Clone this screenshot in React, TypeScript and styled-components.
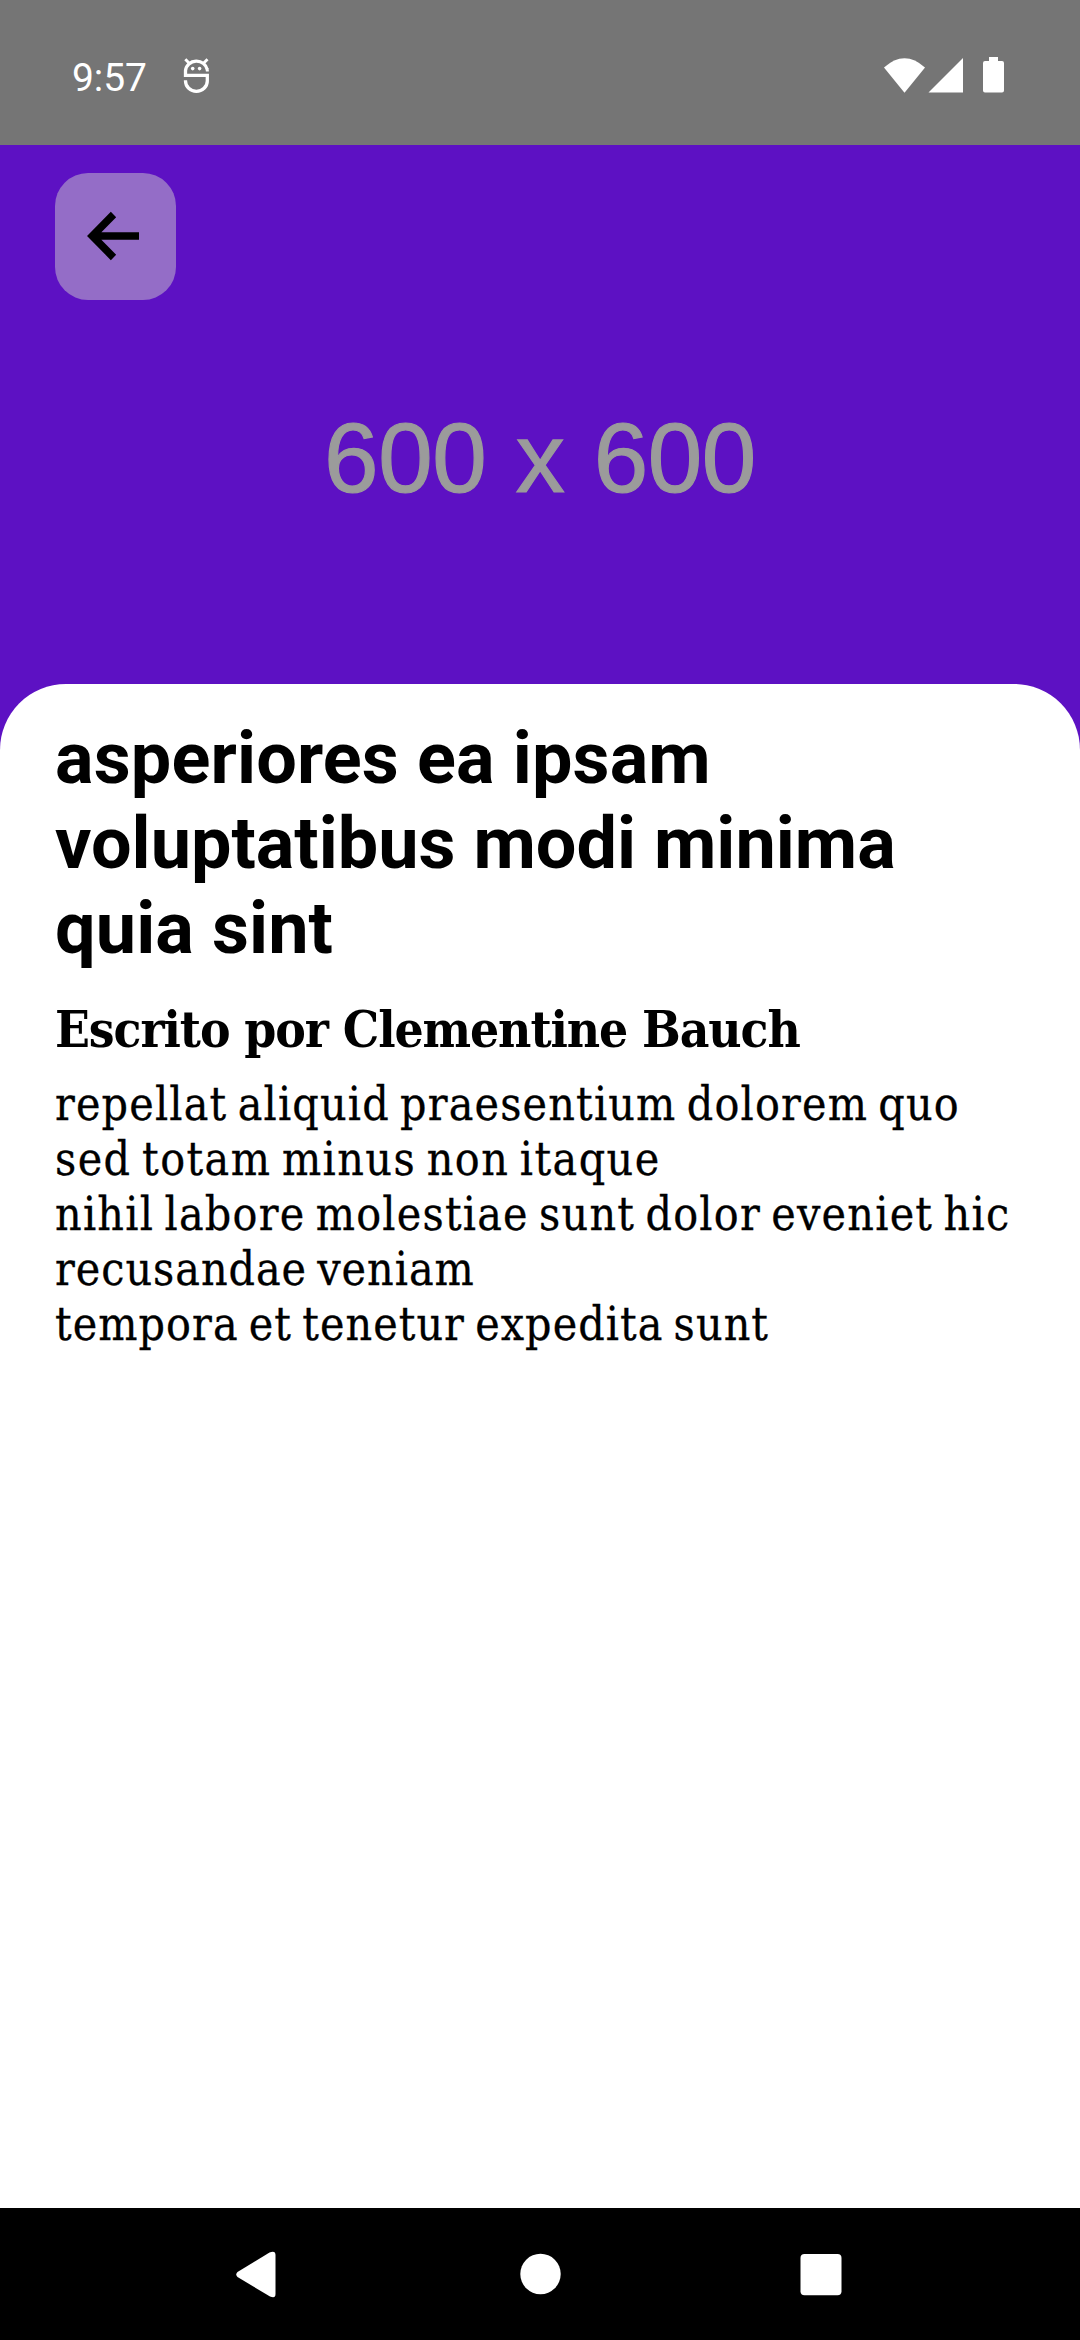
import React from 'react';
import styled, { createGlobalStyle } from 'styled-components';

const GlobalStyle = createGlobalStyle`
  body { margin: 0; background: #fff; }
  * { box-sizing: border-box; }
`;

const Screen = styled.div`
  width: 1080px;
  height: 2340px;
  display: flex;
  flex-direction: column;
  overflow: hidden;
  background: #fff;
  color: #000;
  font-family: Roboto, sans-serif;
`;

const StatusBar = styled.header`
  height: 145px;
  flex: none;
  display: flex;
  align-items: flex-start;
  padding: 54px 75px 0 72px;
  background: #757575;
  color: #fff;
`;

const Clock = styled.time`
  width: 110px;
  padding-top: 1px;
  font-size: 39px;
  line-height: 46px;
  letter-spacing: -0.1px;
`;

const DebugIcon = styled.svg`
  width: 30px;
  height: 40px;
  margin-top: 2px;
`;

const StatusIcons = styled.div`
  margin-left: auto;
`;

const Hero = styled.section`
  height: 605px;
  flex: none;
  display: flex;
  flex-direction: column;
  padding: 28px 55px 0;
  background: #5d11c3;
`;

const BackButton = styled.button`
  width: 121px;
  height: 127px;
  padding: 0;
  border: 0;
  border-radius: 33px;
  display: flex;
  align-items: center;
  justify-content: center;
  background: #946dc7;
`;

const Placeholder = styled.p`
  margin: 103px 0 0;
  text-align: center;
  font-family: 'Liberation Sans', Arial, sans-serif;
  font-size: 98px;
  line-height: 110px;
  letter-spacing: -0.4px;
  word-spacing: 2.5px;
  -webkit-text-stroke: 1.2px #9b9b9b;
  color: #9b9b9b;
`;

const Sheet = styled.main`
  flex: 1;
  margin-top: -66px;
  padding: 32px 55px 0;
  border-radius: 66px 66px 0 0;
  background: #fff;
`;

const Title = styled.h1`
  margin: 0;
  font-size: 72px;
  font-weight: 700;
  line-height: 85px;
`;

const Author = styled.h2`
  margin: 25px 0 0;
  font-family: 'DejaVu Serif Condensed', 'DejaVu Serif', serif;
  font-stretch: condensed;
  font-size: 51px;
  font-weight: 700;
  line-height: 66px;
`;

const Body = styled.p`
  margin: 15px 0 0;
  font-family: 'DejaVu Serif Condensed', 'DejaVu Serif', serif;
  font-stretch: condensed;
  font-size: 46px;
  line-height: 55px;
  word-spacing: -4px;
  -webkit-text-stroke: 0.3px #000;
`;

const Line = styled.span<{ $spacing?: number }>`
  display: block;
  white-space: nowrap;
  letter-spacing: ${({ $spacing = 0 }) => $spacing}px;
`;

const NavBar = styled.nav`
  height: 132px;
  flex: none;
  display: flex;
  justify-content: center;
  align-items: center;
  background: #000;
`;

const NavIcon = styled.svg`
  width: 281px;
  height: 132px;
`;

export default function App() {
  return (
    <>
      <GlobalStyle />
      <Screen>
        <StatusBar>
          <Clock>9:57</Clock>
          <DebugIcon viewBox="0 0 30 40" fill="none" stroke="#fff" strokeWidth="3.3">
            <path d="M26.800 13.800H25.300A11 10.300 0 0 0 3.500 14.500V19.400H25.300V25A10.900 10.300 0 0 1 3.500 25V24.300" />
            <path d="M3.300 3.300L7.500 7.500M25.500 3.300L21.300 7.500" strokeWidth="2.900" />
            <circle cx="10.700" cy="12.600" r="1.800" fill="#fff" stroke="none" />
            <circle cx="17.600" cy="12.600" r="1.800" fill="#fff" stroke="none" />
          </DebugIcon>
          <StatusIcons>
            <svg width="122" height="42" viewBox="882 54 122 42" fill="#fff">
              <path d="M883 67.500Q903.500 49 924 67.500L903.500 92.700Z" />
              <path d="M927.500 92.500L962 58V92.500Z" />
              <path d="M988 57h9v4h4q2 0 2 2v27.500q0 2-2 2h-17q-2 0-2-2V63q0-2 2-2h4z" />
            </svg>
          </StatusIcons>
        </StatusBar>
        <Hero>
          <BackButton aria-label="Volver">
            <svg width="121" height="127" viewBox="0 0 121 127" fill="none" stroke="#000" strokeWidth="7.500">
              <path d="M58.500 41.500L37.300 63L58.500 84.500M38 63H84" />
            </svg>
          </BackButton>
          <Placeholder>600 x 600</Placeholder>
        </Hero>
        <Sheet>
          <Title>
            <Line $spacing={0.14}>asperiores ea ipsam</Line>
            <Line>voluptatibus modi minima</Line>
            <Line $spacing={0.1}>quia sint</Line>
          </Title>
          <Author>
            <Line $spacing={-1.1}>Escrito por Clementine Bauch</Line>
          </Author>
          <Body>
            <Line $spacing={1.17}>repellat aliquid praesentium dolorem quo</Line>
            <Line $spacing={1.44}>sed totam minus non itaque</Line>
            <Line $spacing={1.22}>nihil labore molestiae sunt dolor eveniet hic</Line>
            <Line $spacing={0.98}>recusandae veniam</Line>
            <Line $spacing={1.06}>tempora et tenetur expedita sunt</Line>
          </Body>
        </Sheet>
        <NavBar>
          <NavIcon viewBox="0 0 281 132" fill="#fff">
            <path d="M118.500 64L150.500 44.500Q156.500 42 156.500 47V86Q156.500 91 151 88.500L118.500 69Q116 66.500 118.500 64Z" />
          </NavIcon>
          <NavIcon viewBox="0 0 281 132" fill="#fff">
            <circle cx="140.500" cy="66" r="20.200" />
          </NavIcon>
          <NavIcon viewBox="0 0 281 132" fill="#fff">
            <rect x="119.500" y="46" width="41" height="41.300" rx="4" />
          </NavIcon>
        </NavBar>
      </Screen>
    </>
  );
}
